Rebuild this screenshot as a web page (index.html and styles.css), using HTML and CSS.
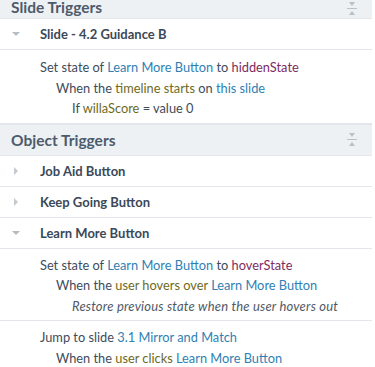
FILE: index.html
```html
<!DOCTYPE html>
<html lang="en">
<head>
    <meta charset="UTF-8">
    <title>Triggers</title>
    <link rel="stylesheet" href="styles.css">
</head>
<body>
    <div class="panel">
        <div class="seccion seccion-primera">
            <span class="seccion-titulo">Slide Triggers</span>
            <svg class="colapsar" width="12" height="14" viewBox="0 0 12 14">
                <path d="M3 0 L9 0 L6 4 Z" fill="#b8c0c8"/>
                <rect x="1" y="6" width="10" height="1" fill="#b8c0c8"/>
                <path d="M6 9 L9 13 L3 13 Z" fill="#b8c0c8"/>
            </svg>
        </div>
        <div class="grupo">
            <span class="flecha abajo"></span>
            <span class="grupo-nombre">Slide - 4.2 Guidance B</span>
        </div>
        <div class="accion accion-primera">
            <p class="nivel-1">Set state of <span class="azul">Learn More Button</span> to <span class="morado">hiddenState</span></p>
            <p class="nivel-2">When the <span class="oliva">timeline starts</span> on <span class="azul">this slide</span></p>
            <p class="nivel-3">If <span class="oliva">willaScore</span> = value 0</p>
        </div>

        <div class="seccion">
            <span class="seccion-titulo">Object Triggers</span>
            <svg class="colapsar" width="12" height="14" viewBox="0 0 12 14">
                <path d="M3 0 L9 0 L6 4 Z" fill="#b8c0c8"/>
                <rect x="1" y="6" width="10" height="1" fill="#b8c0c8"/>
                <path d="M6 9 L9 13 L3 13 Z" fill="#b8c0c8"/>
            </svg>
        </div>
        <div class="grupo">
            <span class="flecha derecha"></span>
            <span class="grupo-nombre">Job Aid Button</span>
        </div>
        <div class="grupo">
            <span class="flecha derecha"></span>
            <span class="grupo-nombre">Keep Going Button</span>
        </div>
        <div class="grupo">
            <span class="flecha abajo"></span>
            <span class="grupo-nombre">Learn More Button</span>
        </div>
        <div class="accion">
            <p class="nivel-1">Set state of <span class="azul">Learn More Button</span> to <span class="morado">hoverState</span></p>
            <p class="nivel-2">When the <span class="oliva">user hovers over</span> <span class="azul">Learn More Button</span></p>
            <p class="nivel-3 cursiva">Restore previous state when the user hovers out</p>
        </div>
        <div class="accion">
            <p class="nivel-1">Jump to slide <span class="azul">3.1 Mirror and Match</span></p>
            <p class="nivel-2">When the <span class="oliva">user clicks</span> <span class="azul">Learn More Button</span></p>
        </div>
    </div>
</body>
</html>
```

FILE: styles.css
```css
:root {
    --color-texto: #3e4b5b;
    --color-azul: #2f7fb4;
    --color-oliva: #6d6a1c;
    --color-morado: #7d2b5f;
    --color-linea: #e3e7eb;
    --color-cabecera: #eef1f4;
    --fuente: 'Lato', 'Noto Sans', sans-serif;
}

* {
    margin: 0; padding: 0; box-sizing: border-box;
}

body {
    font-family: var(--fuente);
    background: #ffffff;
    color: var(--color-texto);
    width: 375px; height: 367px;
    overflow: hidden;
}

.panel {
    width: 372px;
}

.seccion {
    display: flex; align-items: center; justify-content: space-between;
    height: 32px;
    padding: 0 14px 0 11px;
    background: var(--color-cabecera);
    border-top: 1px solid var(--color-linea);
    border-bottom: 1px solid var(--color-linea);
}
.seccion-primera {
    height: 31px;
    margin-top: -12px;
    border-top: none;
    align-items: flex-end;
    padding-bottom: 2px;
}
.seccion-titulo {
    font-size: 15.5px; font-weight: 700;
    color: #4d5b6b;
}

.grupo {
    display: flex; align-items: center;
    height: 31px;
    padding-left: 12px;
    border-bottom: 1px solid var(--color-linea);
}
.grupo-nombre {
    font-size: 13px; font-weight: 700;
    color: #3b4858;
    margin-left: 20px;
}

.flecha {
    width: 0; height: 0;
}
.flecha.abajo {
    border-left: 4px solid transparent;
    border-right: 4px solid transparent;
    border-top: 4px solid #b4bcc4;
}
.flecha.derecha {
    border-top: 4px solid transparent;
    border-bottom: 4px solid transparent;
    border-left: 4px solid #c4cad0;
    margin-left: 2px; margin-right: 2px;
}

.accion {
    padding: 6px 0 4px;
    border-bottom: 1px solid var(--color-linea);
}
.accion-primera { padding-top: 7px; }
.accion:last-child { border-bottom: none; }

.accion p {
    font-size: 12.8px;
    line-height: 20.5px;
    white-space: nowrap;
}
.nivel-1 { padding-left: 40px; }
.nivel-2 { padding-left: 56px; }
.nivel-3 { padding-left: 72px; }
.accion .cursiva {
    font-style: italic; color: #505a66;
    font-size: 13px; letter-spacing: 0.2px;
}

.azul { color: var(--color-azul); }
.oliva { color: var(--color-oliva); }
.morado { color: var(--color-morado); }
```
